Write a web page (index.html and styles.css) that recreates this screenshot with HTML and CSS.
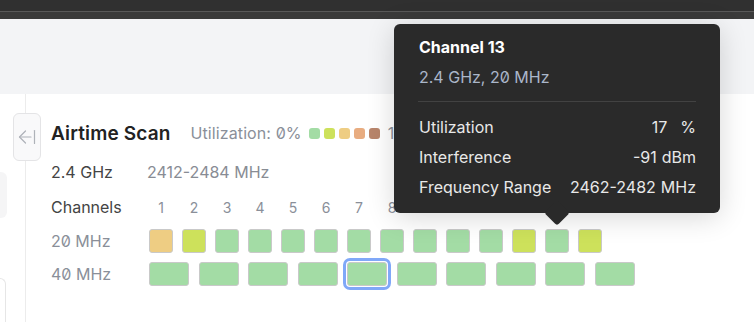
FILE: index.html
```html
<!DOCTYPE html>
<html>

<head>
    <title>Airtime Scan</title>
    <link rel="stylesheet" href="styles.css">
</head>

<body>
    <div class="topbar">
        <div class="topbar-line"></div>
    </div>
    <div class="header"></div>

    <div class="main">
        <div class="sidebar">
            <div class="side-tab"></div>
            <div class="side-box"></div>
        </div>

        <button class="collapse-btn" title="Collapse">
            <svg width="18" height="16" viewBox="0 0 18 16" fill="none" stroke="#aeb2b8" stroke-width="1.2"
                stroke-linecap="round" stroke-linejoin="round">
                <path d="M1.5 8 H13" />
                <path d="M7.5 2 L1.5 8 L7.5 14" />
                <path d="M16.5 1.5 V14.5" />
            </svg>
        </button>

        <div class="content">
            <div class="title-row">
                <h2>Airtime Scan</h2>
                <span class="util">Utilization: 0%</span>
                <span class="legend">
                    <span class="dot lvl-1"></span>
                    <span class="dot lvl-2"></span>
                    <span class="dot lvl-3"></span>
                    <span class="dot lvl-4"></span>
                    <span class="dot lvl-5"></span>
                </span>
                <span class="util">100%</span>
            </div>

            <div class="row freq-row">
                <span class="band">2.4 GHz</span>
                <span class="range">2412-2484 MHz</span>
            </div>

            <div class="row channels-row">
                <span class="label dark">Channels</span>
                <div class="nums" id="nums"></div>
            </div>

            <div class="row cells-row">
                <span class="label">20 MHz</span>
                <div class="cells" id="cells20"></div>
            </div>

            <div class="row cells-row">
                <span class="label">40 MHz</span>
                <div class="cells wide" id="cells40"></div>
            </div>
        </div>
    </div>

    <div class="tooltip">
        <div class="tip-title">Channel 13</div>
        <div class="tip-sub">2.4 GHz, 20 MHz</div>
        <div class="tip-divider"></div>
        <div class="tip-row">
            <span>Utilization</span>
            <span>17<span class="unit pct">%</span></span>
        </div>
        <div class="tip-row">
            <span>Interference</span>
            <span>-91<span class="unit">dBm</span></span>
        </div>
        <div class="tip-row">
            <span>Frequency Range</span>
            <span>2462-2482<span class="unit">MHz</span></span>
        </div>
    </div>

    <script>
        var levels20 = [3, 2, 1, 1, 1, 1, 1, 1, 1, 1, 1, 2, 1, 2];
        var nums = document.getElementById('nums');
        var cells20 = document.getElementById('cells20');
        var cells40 = document.getElementById('cells40');

        // one number and one cell per 20 MHz channel
        levels20.forEach(function (level, i) {
            var n = document.createElement('span');
            n.className = 'num';
            n.textContent = i + 1;
            nums.appendChild(n);

            var cell = document.createElement('span');
            cell.className = 'cell lvl-' + level;
            cells20.appendChild(cell);
        });

        for (var i = 0; i < 10; i++) {
            var cell = document.createElement('span');
            cell.className = 'cell lvl-1';
            if (i === 4) {
                cell.className += ' selected';
            }
            cells40.appendChild(cell);
        }
    </script>
</body>

</html>
```

FILE: styles.css
```css
body {
    margin: 0;
    font-family: Inter, "Noto Sans", sans-serif;
    font-feature-settings: "zero" 1;
    background-color: #ffffff;
    color: #333;
    position: relative;
    height: 322px;
    overflow: hidden;
}

.topbar {
    height: 19px;
    background-color: #3a3a3a;
}

.topbar-line {
    height: 11px;
    background-color: #303030;
    border-bottom: 1px solid #595959;
}

.header {
    height: 75px;
    background-color: #f3f4f6;
}

.main {
    display: flex;
    position: relative;
    height: 228px;
}

.sidebar {
    width: 25px;
    border-right: 1px solid #ececec;
    flex-shrink: 0;
}

.side-tab {
    margin-top: 78px;
    width: 7px;
    height: 46px;
    background-color: #f5f5f6;
    border-radius: 0 6px 6px 0;
}

.side-box {
    margin-top: 60px;
    width: 5px;
    height: 43px;
    border: 1px solid #e6e6e6;
    border-left: none;
    border-bottom: none;
    border-radius: 0 6px 0 0;
}

.collapse-btn {
    position: absolute;
    left: 13px;
    top: 19px;
    width: 28px;
    height: 48px;
    padding: 0;
    background-color: #f9f9fa;
    border: 1px solid #e4e4e6;
    border-radius: 6px;
    display: flex;
    align-items: center;
    justify-content: center;
    cursor: pointer;
}

.content {
    padding-left: 25px;
    padding-top: 27px;
}

.title-row {
    display: flex;
    align-items: center;
    height: 24px;
}

.title-row h2 {
    margin: 0 20px 0 0;
    font-size: 19px;
    font-weight: 600;
    letter-spacing: 0.15px;
    color: #222;
}

.util {
    font-size: 16px;
    letter-spacing: 0.1px;
    color: #8a8f99;
}

.legend {
    display: flex;
    gap: 4px;
    margin: 0 8px 0 7px;
}

.dot {
    width: 11px;
    height: 11px;
    border-radius: 3px;
}

.lvl-1 {
    background-color: #a3dca5;
}

.lvl-2 {
    background-color: #cde15b;
}

.lvl-3 {
    background-color: #eecd83;
}

.lvl-4 {
    background-color: #e8ac80;
}

.lvl-5 {
    background-color: #b8856b;
}

.row {
    display: flex;
    align-items: center;
}

.freq-row {
    height: 22px;
    margin-top: 16px;
    font-size: 16px;
}

.band {
    width: 96px;
    color: #444;
}

.range {
    color: #888c94;
}

.channels-row {
    height: 22px;
    margin-top: 13px;
}

.label {
    width: 98px;
    flex-shrink: 0;
    font-size: 16px;
    color: #8a8f99;
}

.label.dark {
    color: #444;
}

.nums {
    display: flex;
    gap: 9px;
}

.num {
    width: 24px;
    text-align: center;
    font-size: 14px;
    color: #8a8f99;
}

.cells-row {
    height: 24px;
    margin-top: 11px;
}

.cells-row + .cells-row {
    margin-top: 9px;
}

.cells {
    display: flex;
    gap: 9px;
}

.cells.wide {
    gap: 9.5px;
}

.cell {
    box-sizing: border-box;
    width: 24px;
    height: 24px;
    border: 1px solid #c9c9c9;
    border-radius: 3px;
}

.cells.wide .cell {
    width: 40px;
}

.cell.selected {
    outline: 3px solid #80a8f8;
    outline-offset: 1px;
}

.tooltip {
    position: absolute;
    left: 394px;
    top: 24px;
    width: 326px;
    height: 189px;
    box-sizing: border-box;
    padding: 13px 24px 0 25px;
    background-color: #2a2a2a;
    border-radius: 6px;
    box-shadow: 0 4px 28px rgba(0, 0, 0, 0.16);
    color: #e8e8e8;
    font-size: 16px;
}

.tooltip::after {
    content: "";
    position: absolute;
    left: 154px;
    bottom: -9px;
    width: 18px;
    height: 18px;
    background-color: #2a2a2a;
    border-radius: 3px;
    transform: rotate(45deg);
}

.tip-title {
    font-weight: 700;
    font-size: 16px;
    color: #ffffff;
    line-height: 20px;
}

.tip-sub {
    margin-top: 10px;
    line-height: 20px;
    color: #aab6c9;
}

.tip-divider {
    height: 1px;
    background-color: #424242;
    margin: 14px 0 0 -1px;
}

.tip-row {
    display: flex;
    justify-content: space-between;
    line-height: 20px;
    margin-top: 10px;
}

.tip-divider + .tip-row {
    margin-top: 15px;
}

.unit {
    margin-left: 5px;
}

.unit.pct {
    margin-left: 13px;
}
```
